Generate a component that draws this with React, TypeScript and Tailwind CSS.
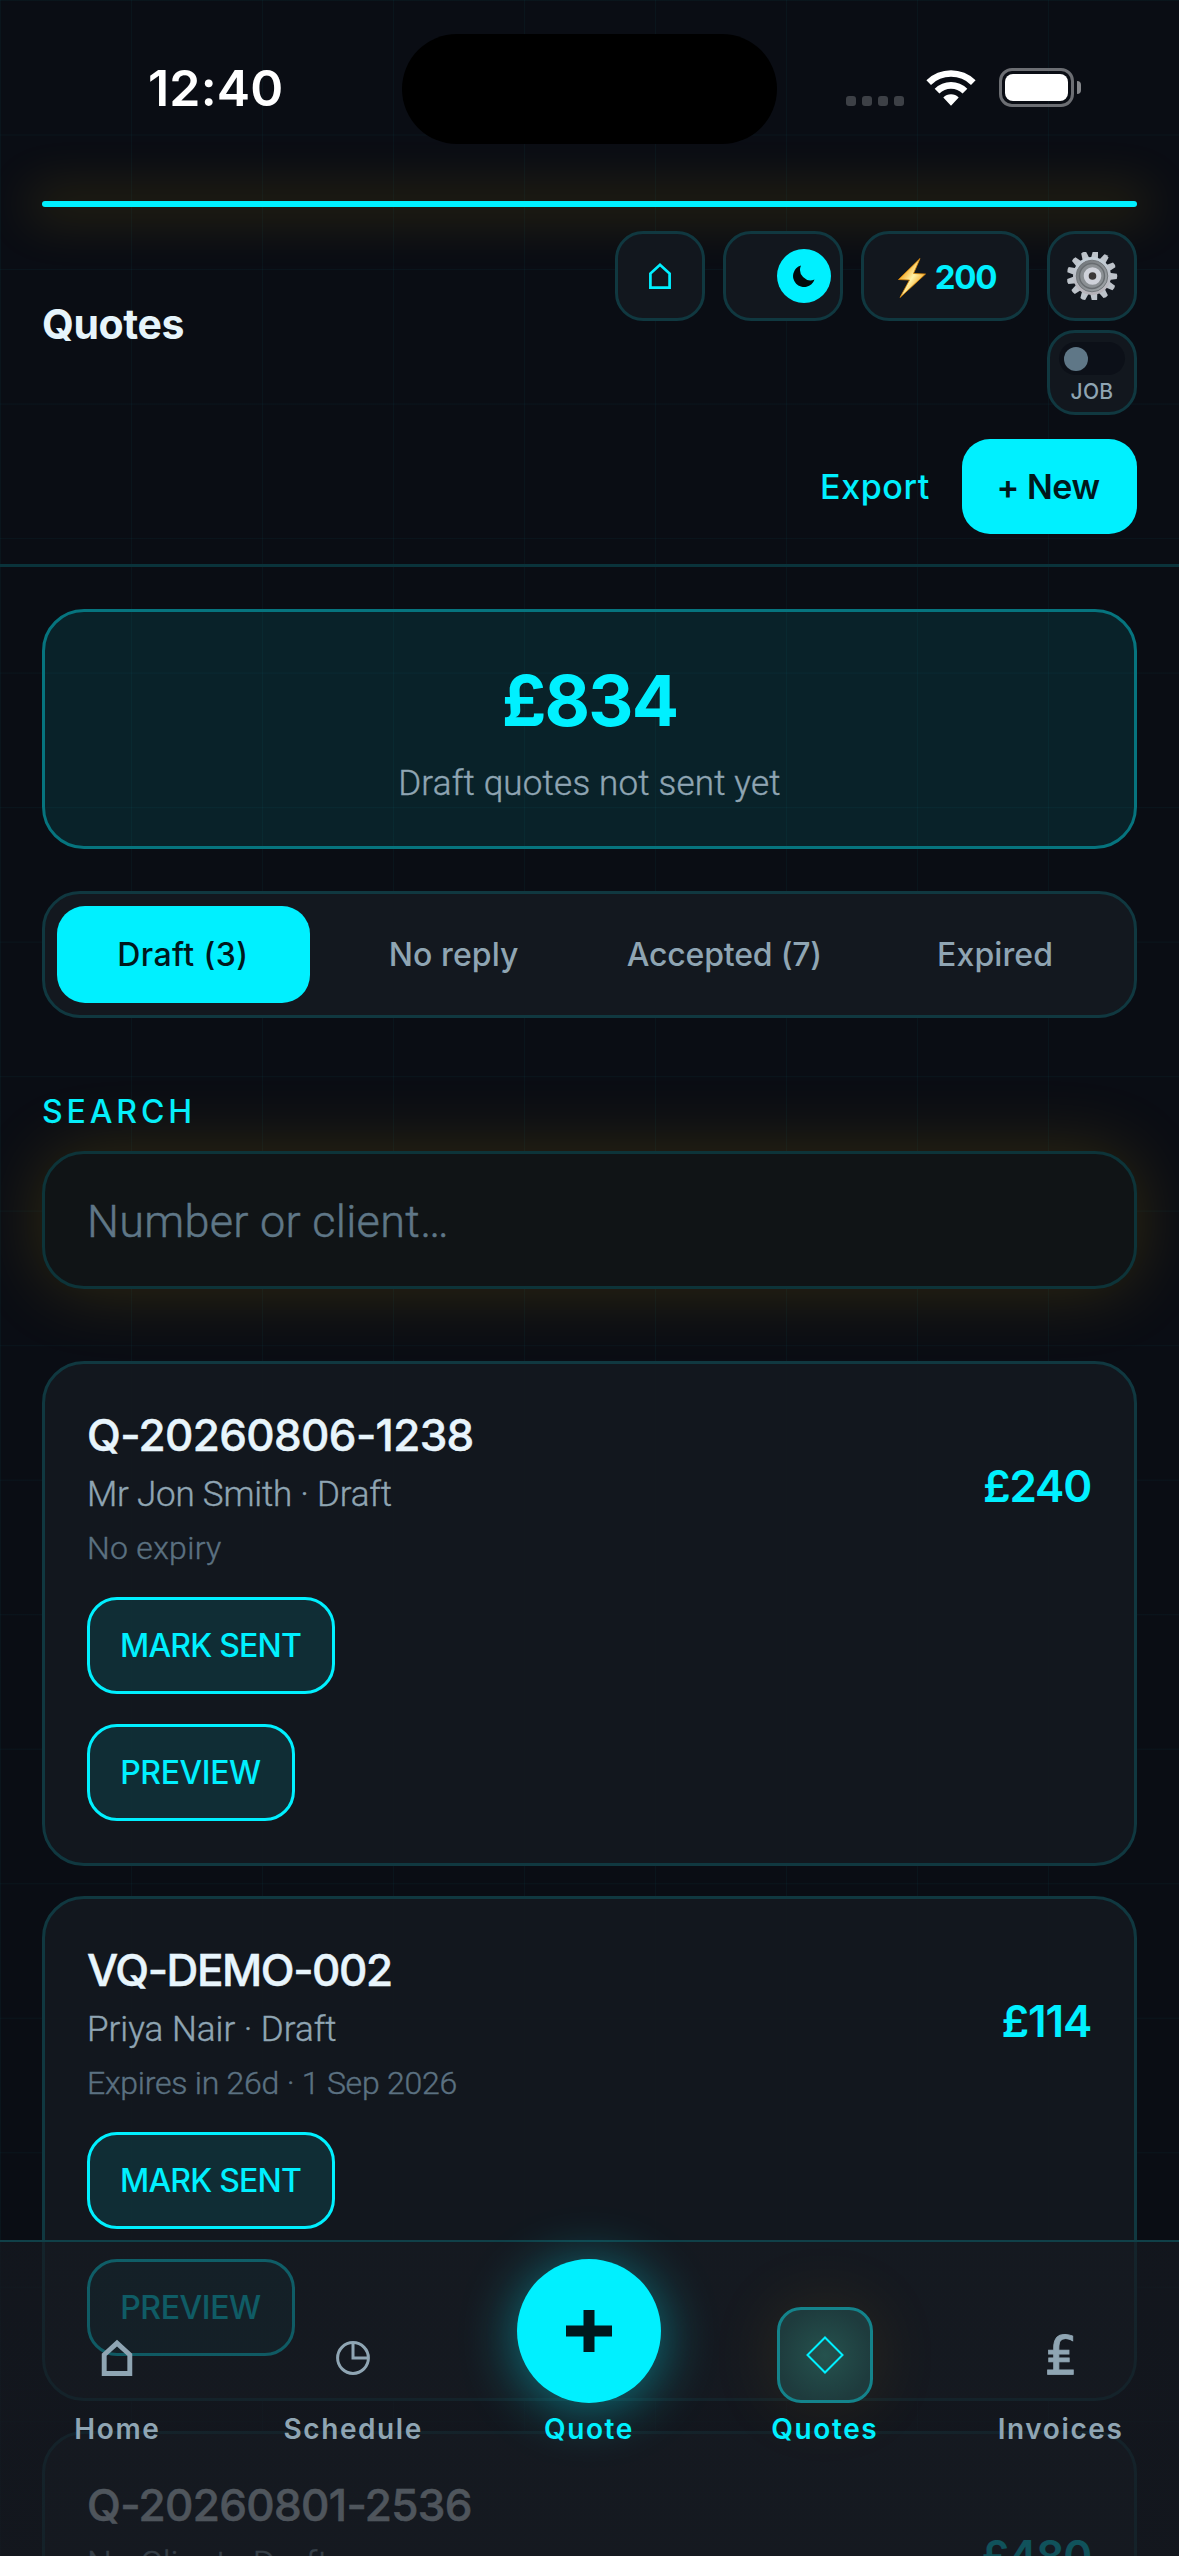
import { ReactNode } from 'react'
import clsx from 'clsx'

type QuoteType = {
  id: string
  client: string
  expiry: string
  total: string
  idClass: string
  clientClass: string
  expiryClass: string
}

type TabType = {
  label: string
  tracking: string
}

const quotes: QuoteType[] = [
  {
    id: 'Q-20260806-1238',
    client: 'Mr Jon Smith · Draft',
    expiry: 'No expiry',
    total: '£240',
    idClass: 'tracking-[-0.65px]',
    clientClass: 'tracking-[-0.2px]',
    expiryClass: 'tracking-[0.3px]',
  },
  {
    id: 'VQ-DEMO-002',
    client: 'Priya Nair · Draft',
    expiry: 'Expires in 26d · 1 Sep 2026',
    total: '£114',
    idClass: 'tracking-[-1.4px]',
    clientClass: 'tracking-[0px]',
    expiryClass: 'tracking-[-0.25px]',
  },
  {
    id: 'Q-20260801-2536',
    client: 'No Client · Draft',
    expiry: 'No expiry',
    total: '£480',
    idClass: 'tracking-[-0.65px]',
    clientClass: 'tracking-[0px]',
    expiryClass: 'tracking-[0.3px]',
  },
]

const tabs: TabType[] = [
  { label: 'Draft (3)', tracking: 'tracking-[0.4px]' },
  { label: 'No reply', tracking: 'tracking-[0.1px]' },
  { label: 'Accepted (7)', tracking: 'tracking-[-0.2px]' },
  { label: 'Expired', tracking: 'tracking-[0.1px]' },
]

const HomeIcon: React.FC<{ className?: string; strokeWidth: number }> = ({
  className,
  strokeWidth,
}) => (
  <svg viewBox="0 0 30 34" fill="none" className={className}>
    <path
      d="M3 31.5V14L15 3l12 11v17.5z"
      stroke="currentColor"
      strokeWidth={strokeWidth}
    />
  </svg>
)

const ClockIcon: React.FC = () => (
  <svg viewBox="0 0 34 34" fill="none" className="size-[34px]">
    <circle cx="17" cy="17" r="15.4" stroke="currentColor" strokeWidth="3" />
    <path d="M17 2v15h15" stroke="currentColor" strokeWidth="3" />
  </svg>
)

const DiamondIcon: React.FC = () => (
  <svg viewBox="0 0 38 38" fill="none" className="size-[38px]">
    <path d="M19 1.5 36.5 19 19 36.5 1.5 19z" stroke="#00f0ff" strokeWidth="2" />
  </svg>
)

const BoltIcon: React.FC = () => (
  <svg viewBox="0 0 28 40" className="h-[40px] w-[28px]">
    <defs>
      <linearGradient id="bolt" x1="0" y1="0" x2="1" y2="1">
        <stop offset="0.2" stopColor="#f59a0c" />
        <stop offset="0.5" stopColor="#fff3a8" />
        <stop offset="0.8" stopColor="#f59a0c" />
      </linearGradient>
    </defs>
    <path
      d="M22 0.5 0.5 21.5 11.5 22 2 39.5 27.5 16 15.5 15.5z"
      fill="url(#bolt)"
      stroke="#e08a08"
      strokeWidth="0.8"
    />
  </svg>
)

const GearIcon: React.FC = () => {
  const teeth = Array.from({ length: 13 }, (_, i) => (i * 360) / 13)

  return (
    <svg viewBox="0 2 52 48" className="h-[48px] w-[52px]">
      <defs>
        <linearGradient id="gear" x1="0" y1="0" x2="0" y2="1">
          <stop offset="0" stopColor="#c3cfd8" />
          <stop offset="1" stopColor="#b6b2b8" />
        </linearGradient>
        <linearGradient id="dish" x1="0" y1="0" x2="1" y2="1">
          <stop offset="0" stopColor="#6e7377" />
          <stop offset="1" stopColor="#a3a8ac" />
        </linearGradient>
      </defs>
      {teeth.map((angle) => (
        <path
          key={angle}
          d="M22.4 9 23.4 1.2q2.6-1.2 5.2 0L29.6 9z"
          fill="#bdc3ca"
          transform={`rotate(${angle + 8} 26 26)`}
        />
      ))}
      <circle cx="26" cy="26" r="19" fill="url(#gear)" />
      <circle cx="26" cy="26" r="15.8" fill="url(#dish)" stroke="#73787c" />
      <circle cx="26" cy="26" r="12.5" fill="#8b9094" stroke="#686d71" strokeWidth="1.4" />
      <circle cx="26.5" cy="26" r="6.3" fill="#3b3838" stroke="#cfd2da" strokeWidth="5" />
    </svg>
  )
}

const StatusBar: React.FC = () => (
  <div className="flex h-[201px] items-start">
    <div className="w-[402px] pt-[58px] pl-[148px] text-[50px] leading-[60px] font-semibold tracking-[0.2px] text-white">
      12:40
    </div>
    <div className="mt-[34px] h-[110px] w-[375px] rounded-full bg-black" />
    <div className="mt-[68px] ml-[69px] flex h-[39px] items-start">
      <div className="mt-[28px] flex gap-[6px]">
        {[0, 1, 2, 3].map((dot) => (
          <div key={dot} className="size-[10px] rounded-[3px] bg-[#3d4046]" />
        ))}
      </div>
      <svg viewBox="0 0 50 37" className="mt-px ml-[22px] h-[37px] w-[50px]">
        <path
          d="M0.4 11.2a35 35 0 0 1 49.2 0.1l-4.6 4.6a28.6 28.6 0 0 0-40 0zM8.7 19.8a23.2 23.2 0 0 1 32.6 0l-4.7 4.7a16.6 16.6 0 0 0-23.2 0zM17.3 28.4a11 11 0 0 1 15.4 0L25 36.8z"
          fill="white"
        />
      </svg>
      <div className="ml-[23px] flex items-center">
        <div className="h-[39px] w-[75px] rounded-[13px] border-3 border-[#6c6e73] p-[3px]">
          <div className="h-full rounded-[8px] bg-white" />
        </div>
        <div className="ml-[3px] h-[13px] w-[4px] rounded-r-full bg-[#85878b]" />
      </div>
    </div>
  </div>
)

const HeaderButton: React.FC<{ className?: string; children: ReactNode }> = ({
  className,
  children,
}) => (
  <button
    className={clsx(
      'flex h-[90px] items-center rounded-[28px] border-3 border-[#103840] bg-[#12171e] text-[#00f0ff]',
      className,
    )}
  >
    {children}
  </button>
)

const Header: React.FC = () => (
  <header className="border-b-3 border-[#0a333b] px-[42px] pb-[30px]">
    <div className="h-[6px] rounded-full bg-[#00f0ff] shadow-[0_0_50px_14px_rgba(255,190,0,0.13)]" />
    <div className="mt-[24px] flex items-center justify-between">
      <h1 className="pt-[2px] text-[41px] leading-[48px] font-bold tracking-[-0.4px] text-[#e6f4fb]">
        Quotes
      </h1>
      <div className="flex items-start gap-[18px]">
        <HeaderButton className="w-[90px] justify-center">
          <HomeIcon className="h-[28px] w-[24px]" strokeWidth={3.4} />
        </HeaderButton>
        <HeaderButton className="w-[120px] justify-end pr-[9px]">
          <div className="flex size-[54px] items-center justify-center rounded-full bg-[#00f0ff]">
            <svg viewBox="0 0 22 22" className="size-[22px]">
              <path d="M8 0.5A11 11 0 1 0 21.5 14.5 10.5 10.5 0 0 1 8 0.5z" fill="#000a0c" />
            </svg>
          </div>
        </HeaderButton>
        <HeaderButton className="w-[168px] justify-center gap-[9px] pt-[4px] pl-[4px]">
          <BoltIcon />
          <span className="text-[33px] font-bold tracking-[-1.2px]">200</span>
        </HeaderButton>
        <div className="flex flex-col gap-[9px]">
          <HeaderButton className="w-[90px] justify-center">
            <GearIcon />
          </HeaderButton>
          <button className="flex h-[85px] w-[90px] flex-col items-center rounded-[28px] border-3 border-[#103840] bg-[#12171e] pt-[9px]">
            <div className="flex h-[33px] w-[66px] items-center rounded-full bg-[#0c1018] pl-[5px]">
              <div className="size-[24px] rounded-full bg-[#5f7787]" />
            </div>
            <span className="mt-[5px] text-[21px] leading-[24px] font-medium tracking-[0.3px] text-[#8fa5b3]">
              JOB
            </span>
          </button>
        </div>
      </div>
    </div>
    <div className="mt-[24px] flex items-center justify-end gap-[32px]">
      <button className="text-[34px] font-medium tracking-[0.6px] text-[#00f0ff]">
        Export
      </button>
      <button className="h-[95px] w-[175px] rounded-[28px] bg-[#00f0ff] pr-[3px] text-[34px] font-semibold tracking-[-0.5px] text-[#00181c]">
        + New
      </button>
    </div>
  </header>
)

const ActionButton: React.FC<{ className?: string; children: ReactNode }> = ({
  className,
  children,
}) => (
  <button
    className={clsx(
      'h-[97px] rounded-[30px] border-3 border-[#00f0ff] bg-[#00f0ff]/10 pt-px pr-px text-[32px] font-medium whitespace-nowrap text-[#00f0ff]',
      className,
    )}
  >
    {children}
  </button>
)

const QuoteCard: React.FC<{ quote: QuoteType }> = ({ quote }) => (
  <article className="h-[505px] shrink-0 rounded-[42px] border-3 border-[#103840] bg-[#13181f]/95 p-[42px]">
    <div className="flex items-center justify-between">
      <div>
        <h2
          className={clsx(
            'text-[44px] leading-[58px] font-medium text-[#e8f5fc] [-webkit-text-stroke:0.5px]',
            quote.idClass,
          )}
        >
          {quote.id}
        </h2>
        <p
          className={clsx(
            'mt-[7px] font-[Roboto] text-[35px] leading-[48px] font-light text-[#8fa5b3] [-webkit-text-stroke:0.4px]',
            quote.clientClass,
          )}
        >
          {quote.client}
        </p>
        <p
          className={clsx(
            'mt-[7px] font-[Roboto] text-[32px] leading-[44px] font-light text-[#5b7181] [-webkit-text-stroke:0.4px]',
            quote.expiryClass,
          )}
        >
          {quote.expiry}
        </p>
      </div>
      <span className="pr-px pb-[5px] text-[44px] font-semibold tracking-[-1.2px] text-[#00f0ff]">
        {quote.total}
      </span>
    </div>
    <div className="mt-[27px] flex flex-col items-start gap-[30px]">
      <ActionButton className="w-[248px] tracking-[-0.8px]">MARK SENT</ActionButton>
      <ActionButton className="w-[208px] tracking-[-0.4px]">PREVIEW</ActionButton>
    </div>
  </article>
)

const NavItem: React.FC<{
  label: string
  active?: boolean
  children: ReactNode
}> = ({ label, active, children }) => (
  <div
    className={clsx(
      'flex flex-col items-center',
      active ? 'text-[#00f0ff]' : 'text-[#8fa5b3]',
    )}
  >
    <div className="flex h-[144px] items-end">{children}</div>
    <span className="mt-[8px] pr-px text-[28px] leading-[36px] font-semibold tracking-[1.6px]">
      {label}
    </span>
  </div>
)

const NavIcon: React.FC<{ children: ReactNode }> = ({ children }) => (
  <div className="flex size-[96px] items-center justify-center pt-[6px] pr-[2px]">
    {children}
  </div>
)

const BottomNav: React.FC = () => (
  <nav className="absolute inset-x-0 bottom-0 grid h-[316px] grid-cols-5 border-t-2 border-[#104048] bg-linear-to-b from-[#161a21]/68 to-[#161a21]/74 pt-[17px]">
    <NavItem label="Home">
      <NavIcon>
        <HomeIcon className="h-[38px] w-[32px]" strokeWidth={4.6} />
      </NavIcon>
    </NavItem>
    <NavItem label="Schedule">
      <NavIcon>
        <ClockIcon />
      </NavIcon>
    </NavItem>
    <NavItem label="Quote" active>
      <div className="flex size-[144px] items-center justify-center rounded-full bg-[#00f0ff] shadow-[0_6px_56px_rgba(0,240,255,0.45)]">
        <svg viewBox="0 0 46 42" className="h-[42px] w-[46px]">
          <path d="M23 0v42M0 21h46" stroke="#00181c" strokeWidth="11" />
        </svg>
      </div>
    </NavItem>
    <NavItem label="Quotes" active>
      <div className="flex size-[96px] items-center justify-center rounded-[24px] border-3 border-[#14838b] bg-[radial-gradient(circle,#25524e_0%,#1e3b3d_75%)] shadow-[0_0_72px_rgba(255,180,0,0.1)]">
        <DiamondIcon />
      </div>
    </NavItem>
    <NavItem label="Invoices">
      <NavIcon>
        <span className="pb-[4px] pl-[2px] font-['DejaVu_Sans',sans-serif] text-[53px] leading-[60px] [-webkit-text-stroke:0.8px]">
          ₤
        </span>
      </NavIcon>
    </NavItem>
  </nav>
)

const App: React.FC = () => {
  return (
    <div className="relative h-[2556px] w-[1179px] overflow-hidden bg-[#0a0d14] bg-[linear-gradient(to_right,rgba(0,240,255,0.035)_1px,transparent_1px),linear-gradient(to_bottom,rgba(0,240,255,0.035)_1px,transparent_1px)] bg-size-[131px_134.53px] font-['Inter',sans-serif]">
      <StatusBar />
      <Header />
      <main className="flex flex-col px-[42px] pt-[42px]">
        <section className="h-[240px] rounded-[42px] border-3 border-[#06747e] bg-[#00f0ff]/9 pt-[53px] text-center">
          <div className="text-[70px] leading-[72px] font-bold tracking-[-1.8px] text-[#00f0ff]">
            £834
          </div>
          <div className="mt-[23px] font-[Roboto] text-[35px] leading-[48px] font-light tracking-[0.2px] text-[#8fa5b3] [-webkit-text-stroke:0.4px]">
            Draft quotes not sent yet
          </div>
        </section>
        <div className="mt-[42px] grid h-[127px] grid-cols-4 gap-[18px] rounded-[38px] border-3 border-[#103840] bg-[#13181f] p-[12px]">
          {tabs.map((tab, index) => (
            <button
              key={tab.label}
              className={clsx(
                'rounded-[28px] pr-px text-[32px] font-medium whitespace-nowrap',
                tab.tracking,
                index === 0 ? 'bg-[#00f0ff] text-[#00181c]' : 'text-[#8fa5b3]',
              )}
            >
              {tab.label}
            </button>
          ))}
        </div>
        <label className="mt-[74px] mb-[19px] text-[32px] leading-[40px] font-medium tracking-[3.9px] text-[#00f0ff]">
          SEARCH
        </label>
        <input
          placeholder="Number or client…"
          className="h-[138px] rounded-[42px] border-3 border-[#0d3439] bg-[#101416] px-[42px] pt-[2px] font-[Roboto] text-[45px] font-light tracking-[0.3px] text-[#e8f5fc] shadow-[0_0_72px_rgba(255,190,0,0.17)] [-webkit-text-stroke:0.5px_#5f7787] placeholder:text-[#5f7787]"
        />
        <div className="mt-[72px] flex flex-col gap-[30px]">
          {quotes.map((quote) => (
            <QuoteCard key={quote.id} quote={quote} />
          ))}
        </div>
      </main>
      <BottomNav />
    </div>
  )
}

export default App
